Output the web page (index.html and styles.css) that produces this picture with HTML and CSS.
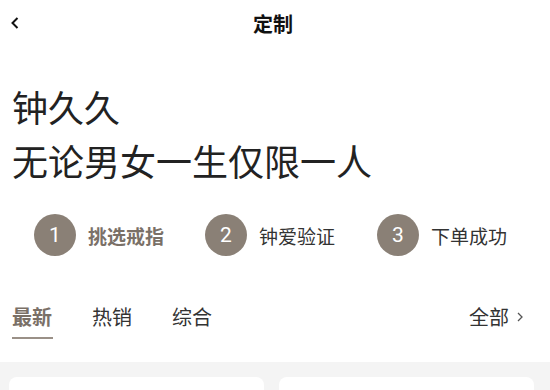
FILE: index.html
```html
<!DOCTYPE html>
<html lang="zh-CN">
<head>
    <meta charset="UTF-8">
    <meta name="viewport" content="width=device-width, initial-scale=1.0">
    <title>定制</title>
    <link rel="stylesheet" href="styles.css">
</head>
<body>
    <div class="header">
        <a class="back" href="#">
            <svg width="8" height="12" viewBox="0 0 8 12"><polyline points="6.5,1 1.5,6 6.5,11" fill="none" stroke="#111" stroke-width="2"/></svg>
        </a>
        <h1>定制</h1>
    </div>

    <div class="headline">
        <p>钟久久</p>
        <p>无论男女一生仅限一人</p>
    </div>

    <div class="steps">
        <div class="step active">
            <span class="num">1</span>
            <span class="label">挑选戒指</span>
        </div>
        <div class="step">
            <span class="num">2</span>
            <span class="label">钟爱验证</span>
        </div>
        <div class="step">
            <span class="num">3</span>
            <span class="label">下单成功</span>
        </div>
    </div>

    <div class="tabs">
        <a class="tab current" href="#">最新</a>
        <a class="tab" href="#">热销</a>
        <a class="tab" href="#">综合</a>
        <a class="all" href="#">全部
            <svg width="6" height="10" viewBox="0 0 6 10"><polyline points="1,1 5,5 1,9" fill="none" stroke="#555" stroke-width="1.3"/></svg>
        </a>
    </div>

    <div class="list">
        <div class="card"></div>
        <div class="card"></div>
    </div>
</body>
</html>
```

FILE: styles.css
```css
body {
    font-family: 'Noto Sans CJK SC', 'Noto Sans', sans-serif;
    background-color: #fff;
    color: #222;
    margin: 0;
    padding: 0;
}

a {
    color: inherit;
    text-decoration: none;
}

.header {
    position: relative;
    height: 48px;
    display: flex;
    align-items: center;
    justify-content: center;
}

.header h1 {
    margin: 0;
    font-size: 20px;
    font-weight: bold;
    color: #111;
    line-height: 48px;
    padding-right: 4px;
}

.back {
    position: absolute;
    left: 11px;
    top: 17px;
    display: flex;
}

.headline {
    padding: 31px 12px 0;
}

.headline p {
    margin: 0;
    font-size: 36px;
    line-height: 54px;
    color: #222;
}

.steps {
    display: grid;
    grid-template-columns: 171px 172px 171px;
    padding-left: 34px;
    margin-top: 27px;
}

.step {
    display: flex;
    align-items: center;
    gap: 12px;
}

.num {
    width: 42px;
    height: 42px;
    border-radius: 50%;
    background-color: #8a8076;
    color: #fff;
    font-family: 'Roboto', 'Liberation Sans', sans-serif;
    font-size: 21px;
    display: flex;
    align-items: center;
    justify-content: center;
}

.label {
    font-size: 19px;
    color: #333;
}

.step.active .label {
    color: #7a7067;
    font-weight: bold;
}

.tabs {
    display: flex;
    align-items: center;
    padding: 0 27px 0 12px;
    margin-top: 46px;
    height: 30px;
    gap: 40px;
}

.tab {
    position: relative;
    font-size: 20px;
    line-height: 28px;
    color: #333;
}

.tab.current {
    color: #7a7067;
    font-weight: bold;
}

.tab.current::after {
    content: '';
    position: absolute;
    left: 0;
    right: -1px;
    bottom: -8px;
    height: 2px;
    background-color: #9a9087;
}

.all {
    margin-left: auto;
    font-size: 20px;
    line-height: 28px;
    color: #333;
    display: flex;
    align-items: center;
    gap: 8px;
}

.list {
    margin-top: 30px;
    background-color: #f4f4f4;
    padding: 15px 16px 20px 9px;
    display: grid;
    grid-template-columns: 1fr 1fr;
    gap: 15px;
}

.card {
    height: 120px;
    background-color: #fff;
    border-radius: 8px;
}
```
